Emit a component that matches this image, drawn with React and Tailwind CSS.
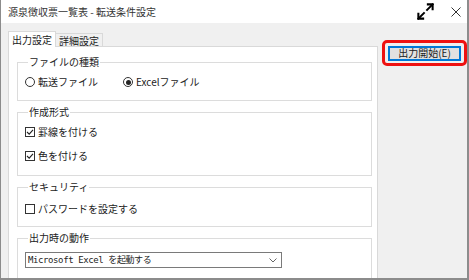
import React from "react";

const jp = { fontFamily: '"Noto Sans CJK JP", "Noto Sans", sans-serif' };

function Group({ label, children, className = "" }) {
  return (
    <fieldset className={"border border-[#dcdcdc] pl-[7px] pr-2 " + className}>
      <legend className="ml-[3px] px-[1px] text-[10px] leading-[12px] text-[#222]">{label}</legend>
      {children}
    </fieldset>
  );
}

function Radio({ checked, label }) {
  return (
    <div className="flex items-center gap-[3px]">
      <span className="w-[10px] h-[10px] rounded-full border border-[#333] flex items-center justify-center bg-white">
        {checked && <span className="w-[5px] h-[5px] rounded-full bg-[#222]" />}
      </span>
      <span className="text-[10px] leading-[14px] text-[#222]">{label}</span>
    </div>
  );
}

function Check({ checked, label }) {
  return (
    <div className="flex items-center gap-[3px]">
      <span className="w-[10px] h-[10px] border border-[#333] bg-white flex items-center justify-center">
        {checked && (
          <svg width="8" height="8" viewBox="0 0 8 8">
            <path d="M1 4 L3.2 6.2 L7 1.8" fill="none" stroke="#222" strokeWidth="1.1" />
          </svg>
        )}
      </span>
      <span className="text-[10px] leading-[14px] text-[#222]">{label}</span>
    </div>
  );
}

export default function App() {
  return (
    <div style={jp} className="w-[469px] h-[280px] bg-[#f0f0f0] border-l border-r-2 border-b-2 border-[#8c8c8c] flex flex-col overflow-hidden">
      <div className="h-[23px] bg-white flex items-center pl-[7px] shrink-0">
        <span className="text-[10px] text-[#333] leading-none">源泉徴収票一覧表 - 転送条件設定</span>
        <div className="ml-auto flex items-center">
          <svg width="19" height="19" viewBox="0 0 24 24" fill="none" stroke="#000" strokeWidth="2.6" strokeLinecap="square" className="mr-[16px] mt-[-1px]">
            <polyline points="15 3 21 3 21 9" />
            <polyline points="9 21 3 21 3 15" />
            <line x1="21" y1="3" x2="14" y2="10" />
            <line x1="3" y1="21" x2="10" y2="14" />
          </svg>
          <svg width="10" height="10" viewBox="0 0 10 10" className="mr-[6px]">
            <path d="M0.5 0.5 L9.5 9.5 M9.5 0.5 L0.5 9.5" stroke="#333" strokeWidth="1" />
          </svg>
        </div>
      </div>
      <div className="flex-1 flex min-h-0">
        <div className="w-[377px] pl-[7px] pt-[8px] flex flex-col">
          <div className="flex items-end h-[15px] relative z-10">
            <div className="h-[16px] mb-[-1px] px-[3px] bg-white border border-b-0 border-[#d9d9d9] text-[10px] leading-[15px] text-[#222]">出力設定</div>
            <div className="h-[13px] px-[3px] border border-l-0 border-b-0 border-[#d9d9d9] bg-[#f0f0f0] text-[10px] leading-[13px] text-[#222]">詳細設定</div>
          </div>
          <div className="flex-1 bg-white border border-[#d9d9d9] pl-[8px] pr-[5px] pt-[9px] flex flex-col gap-[5px]">
            <Group label="ファイルの種類" className="h-[45px]">
              <div className="flex items-center pt-[7px]">
                <div className="w-[98px]"><Radio label="転送ファイル" /></div>
                <Radio checked label="Excelファイル" />
              </div>
            </Group>
            <Group label="作成形式" className="h-[70px]">
              <div className="flex flex-col gap-[10px] pt-[7px]">
                <Check checked label="罫線を付ける" />
                <Check checked label="色を付ける" />
              </div>
            </Group>
            <Group label="セキュリティ" className="h-[46px]">
              <div className="pt-[9px]">
                <Check label="パスワードを設定する" />
              </div>
            </Group>
            <Group label="出力時の動作" className="h-[60px]">
              <div className="pt-[8px]">
                <div className="w-[257px] h-[16px] border border-[#7a7a7a] bg-white flex items-center pl-[2px] pr-[4px]">
                  <span style={{ fontFamily: '"DejaVu Sans Mono", "Noto Sans CJK JP", monospace' }} className="text-[9px] leading-none text-[#222] tracking-[-0.4px]">Microsoft Excel を起動する</span>
                  <svg width="8" height="5" viewBox="0 0 8 5" className="ml-auto">
                    <path d="M0.5 0.5 L4 4 L7.5 0.5" fill="none" stroke="#666" strokeWidth="1" />
                  </svg>
                </div>
              </div>
            </Group>
          </div>
        </div>
        <div className="flex-1 pt-[17px] pl-[4px]">
          <div className="w-[85px] h-[26px] border-[3px] border-[#ee1111] rounded-[5px] flex items-center justify-center">
            <div className="w-[73px] h-[15px] bg-[#e1e1e1] border border-[#0078d7] outline outline-1 outline-[#0078d7] -outline-offset-2 flex items-center justify-center text-[10px] leading-none text-[#222]">出力開始(E)</div>
          </div>
        </div>
      </div>
    </div>
  );
}
